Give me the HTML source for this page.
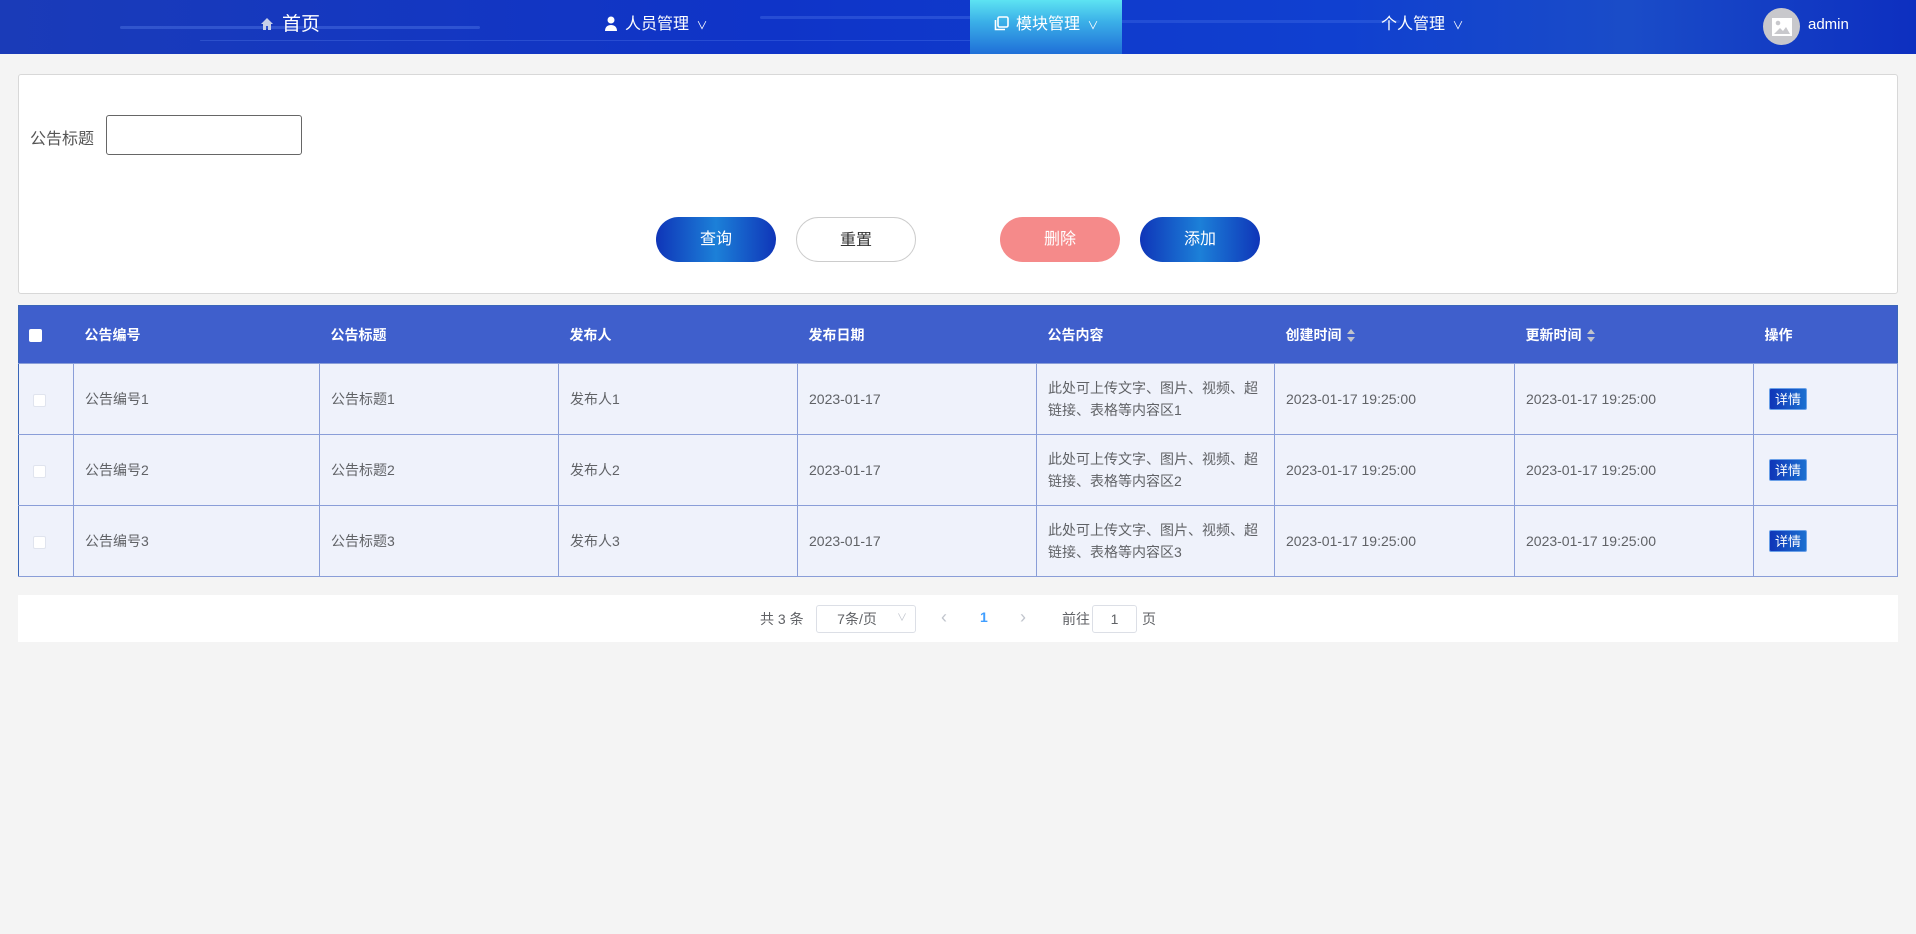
<!DOCTYPE html>
<html><head><meta charset="utf-8">
<style>
*{box-sizing:border-box;margin:0;padding:0}
body{width:1916px;height:934px;background:#f4f4f4;font-family:"Liberation Sans","Noto Sans CJK SC",sans-serif;position:relative;overflow:hidden;color:#606266}
.hdr{position:absolute;left:0;top:0;width:1916px;height:54px;background:linear-gradient(90deg,#1a3bb8 0%,#0f34c8 40%,#1040d0 70%,#1a4cc8 85%,#0d2fc0 100%);overflow:hidden}
.hdr .line{position:absolute;height:3px;border-radius:2px;background:rgba(120,160,255,.45)}
.nav{position:absolute;top:0;height:54px;line-height:50px;color:#fff;font-size:16px;white-space:nowrap}
.act{position:absolute;left:970px;top:0;width:152px;height:54px;background:linear-gradient(180deg,#5de3f2 0%,#3bb0e8 40%,#1f6fd8 100%)}
.abs{position:absolute}
.box{position:absolute;left:18px;top:74px;width:1880px;height:220px;background:#fff;border:1px solid #d8d8d8;border-radius:3px}
.btn{position:absolute;top:217px;height:45px;width:120px;border-radius:23px;color:#fff;font-size:16px;text-align:center;line-height:45px}
.blue{background:linear-gradient(90deg,#0f35b8 0%,#1c80d8 50%,#0f35b8 100%)}
table{position:absolute;left:18px;top:305px;width:1880px;border-collapse:collapse;border:1px solid #3a66b8;font-size:14px}
th{background:#3f5fcc;color:#fff;height:58px;text-align:left;padding-left:11px;font-weight:bold;font-size:14px}
td{background:#eff2fb;height:71px;border:1px solid #8a9ed8;padding-left:11px;color:#606266;line-height:22px}
tr td:first-child{border-left:none}
.cb{display:inline-block;width:13px;height:13px;background:#fff;border-radius:2px;vertical-align:middle}
td .cb{border:1px solid #e0e4ee}
.det{display:inline-block;background:linear-gradient(90deg,#0f35b8,#1c70d0);color:#fff;font-size:13px;padding:0 5px;height:22px;line-height:22px;border-radius:2px;border:1px solid #6aa0e8;margin-left:4px}
.sort{display:inline-block;vertical-align:middle;margin-left:5px;width:8px;height:13px;position:relative}
.sort:before{content:"";position:absolute;top:0;left:0;border:4px solid transparent;border-bottom:5px solid #c0c4cc;border-top:none}
.sort:after{content:"";position:absolute;bottom:0;left:0;border:4px solid transparent;border-top:5px solid #c0c4cc;border-bottom:none}
.pg{position:absolute;left:18px;top:595px;width:1880px;height:47px;background:#fff;font-size:14px}
</style></head><body>
<div class="hdr">
  <div class="line" style="left:120px;top:26px;width:360px;opacity:.6"></div>
  <div class="line" style="left:760px;top:16px;width:260px;opacity:.5"></div>
  <div class="line" style="left:1060px;top:20px;width:340px;opacity:.4"></div>
  <div class="line" style="left:200px;top:40px;width:900px;height:1px;opacity:.5"></div>
  <div class="act"></div>
  <div class="nav" style="left:260px;font-size:19px"><svg width="14" height="14" viewBox="0 0 14 14" style="vertical-align:-1px;margin-right:8px"><path d="M7 1L1 7h2v6h3v-4h2v4h3V7h2z" fill="#c8d0e8"/></svg>首页</div>
  <div class="nav" style="left:604px"><svg width="14" height="15" viewBox="0 0 14 15" style="vertical-align:-2px;margin-right:7px"><circle cx="7" cy="4" r="3.5" fill="#fff"/><path d="M1 15c0-4 2.5-6 6-6s6 2 6 6z" fill="#fff"/></svg>人员管理 <span style="font-size:11px;margin-left:3px">∨</span></div>
  <div class="nav" style="left:994px"><svg width="15" height="15" viewBox="0 0 15 15" style="vertical-align:-2px;margin-right:7px"><rect x="4" y="1" width="10" height="10" rx="1.5" fill="none" stroke="#fff" stroke-width="1.6"/><path d="M1.5 4v9.5H11" fill="none" stroke="#fff" stroke-width="1.6"/></svg>模块管理 <span style="font-size:11px;margin-left:3px">∨</span></div>
  <div class="nav" style="left:1381px">个人管理 <span style="font-size:11px;margin-left:3px">∨</span></div>
  <div class="abs" style="left:1763px;top:8px;width:37px;height:37px;border-radius:50%;background:#c8c8cc"><svg width="20" height="18" viewBox="0 0 20 18" style="position:absolute;left:9px;top:10px"><rect width="20" height="18" fill="#fff"/><circle cx="6" cy="5" r="2.3" fill="#c8c8cc"/><path d="M2 16l6-6 3 3 3-4 4 7z" fill="#c8c8cc"/></svg></div>
  <div class="nav" style="left:1808px;font-size:15px">admin</div>
</div>

<div class="box">
  <div class="abs" style="left:11px;top:50px;font-size:16px;color:#555">公告标题</div>
  <div class="abs" style="left:87px;top:40px;width:196px;height:40px;border:1px solid #666;border-radius:3px"></div>
</div>
<div class="btn blue" style="left:656px">查询</div>
<div class="btn" style="left:796px;background:#fff;border:1px solid #ccc;color:#333">重置</div>
<div class="btn" style="left:1000px;background:#f58a8a">删除</div>
<div class="btn blue" style="left:1140px">添加</div>

<table>
<colgroup><col style="width:55px"><col style="width:246px"><col style="width:239px"><col style="width:239px"><col style="width:239px"><col style="width:238px"><col style="width:240px"><col style="width:239px"><col></colgroup>
<tr><th style="padding-left:10px"><span class="cb"></span></th><th>公告编号</th><th>公告标题</th><th>发布人</th><th>发布日期</th><th>公告内容</th><th>创建时间<span class="sort"></span></th><th>更新时间<span class="sort"></span></th><th>操作</th></tr>
<tr><td style="padding-left:14px"><span class="cb"></span></td><td>公告编号1</td><td>公告标题1</td><td>发布人1</td><td>2023-01-17</td><td>此处可上传文字、图片、视频、超<br>链接、表格等内容区1</td><td>2023-01-17 19:25:00</td><td>2023-01-17 19:25:00</td><td><span class="det">详情</span></td></tr>
<tr><td style="padding-left:14px"><span class="cb"></span></td><td>公告编号2</td><td>公告标题2</td><td>发布人2</td><td>2023-01-17</td><td>此处可上传文字、图片、视频、超<br>链接、表格等内容区2</td><td>2023-01-17 19:25:00</td><td>2023-01-17 19:25:00</td><td><span class="det">详情</span></td></tr>
<tr><td style="padding-left:14px"><span class="cb"></span></td><td>公告编号3</td><td>公告标题3</td><td>发布人3</td><td>2023-01-17</td><td>此处可上传文字、图片、视频、超<br>链接、表格等内容区3</td><td>2023-01-17 19:25:00</td><td>2023-01-17 19:25:00</td><td><span class="det">详情</span></td></tr>
</table>

<div class="pg">
  <div class="abs" style="left:742px;top:14px">共 3 条</div>
  <div class="abs" style="left:798px;top:10px;width:100px;height:28px;border:1px solid #dcdfe6;border-radius:3px;text-align:center;line-height:26px;padding-right:18px">7条/页<span style="position:absolute;right:8px;color:#c0c4cc;font-size:10px">∨</span></div>
  <div class="abs" style="left:923px;top:12px;color:#c0c4cc;font-size:18px">‹</div>
  <div class="abs" style="left:962px;top:14px;color:#409eff;font-weight:bold">1</div>
  <div class="abs" style="left:1002px;top:12px;color:#c0c4cc;font-size:18px">›</div>
  <div class="abs" style="left:1044px;top:14px">前往</div>
  <div class="abs" style="left:1074px;top:10px;width:45px;height:28px;border:1px solid #dcdfe6;border-radius:3px;text-align:center;line-height:26px;color:#606266">1</div>
  <div class="abs" style="left:1124px;top:14px">页</div>
</div>
</body></html>
